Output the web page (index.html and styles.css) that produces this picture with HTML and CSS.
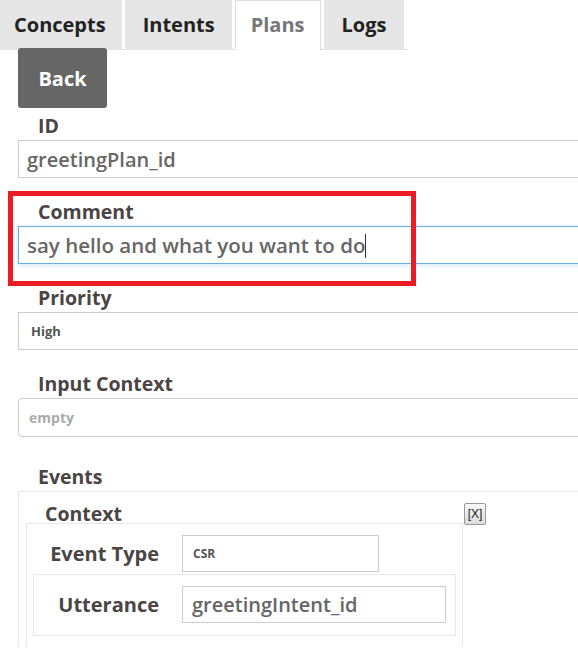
FILE: index.html
```html
<!DOCTYPE html>
<html lang="en">
<head>
    <meta charset="UTF-8">
    <meta name="viewport" content="width=device-width, initial-scale=1.0">
    <title>Plans</title>
    <link rel="stylesheet" href="styles.css">
</head>
<body>

<div class="tabs">
    <div class="tab">Concepts</div>
    <div class="tab">Intents</div>
    <div class="tab active">Plans</div>
    <div class="tab">Logs</div>
</div>

<div class="page">
    <button class="back">Back</button>

    <div class="field first">
        <label>ID</label>
        <input type="text" value="greetingPlan_id" readonly>
    </div>

    <div class="field marked">
        <label>Comment</label>
        <div class="input focused">say hello and what you want to do<span class="caret"></span></div>
        <div class="mark"></div>
    </div>

    <div class="field">
        <label>Priority</label>
        <select class="select">
            <option>High</option>
        </select>
    </div>

    <div class="field">
        <label>Input Context</label>
        <input type="text" class="rounded" placeholder="empty">
    </div>

    <div class="field events">
        <label>Events</label>
        <div class="events-box">
            <div class="context-col">
                <div class="context-title">Context</div>
                <div class="context-box">
                    <div class="row">
                        <span class="row-label">Event Type</span>
                        <input type="text" class="small" value="CSR" readonly>
                    </div>
                    <div class="row boxed">
                        <span class="row-label">Utterance</span>
                        <input type="text" class="wide" value="greetingIntent_id" readonly>
                    </div>
                </div>
            </div>
            <button class="remove">[X]</button>
        </div>
    </div>
</div>

</body>
</html>
```

FILE: styles.css
```css
html, body {
    margin: 0;
    padding: 0;
    overflow: hidden;
    background-color: #fff;
}

body {
    font-family: "Open Sans", sans-serif;
    color: #4a4444;
}

/* tab strip */
.tabs {
    display: inline-flex;
    gap: 3px;
    margin-left: -4px;
    padding-right: 4px;
    border-bottom: 1px solid #ddd;
    height: 49px;
}

.tab {
    height: 50px;
    line-height: 50px;
    padding: 0 18px;
    font-size: 20px;
    font-weight: bold;
    color: #222;
    background-color: #e6e6e6;
}

.tab:first-child {
    padding: 0 16px 0 18px;
}

.tab:nth-child(2) {
    padding: 0 17px 0 18px;
}

.tab.active {
    background-color: #fff;
    color: #777;
    padding: 0 15px;
    border: 1px solid #ddd;
    border-bottom: none;
    height: 49px;
    line-height: 48px;
}

.page {
    padding-left: 18px;
}

.back {
    display: block;
    width: 89px;
    height: 60px;
    margin-top: -2px;
    border: none;
    border-radius: 3px;
    background-color: #666;
    color: #fff;
    font-family: "Open Sans", sans-serif;
    font-size: 20px;
    font-weight: bold;
    position: relative;
}

/* form fields */
.field {
    margin-bottom: 22px;
}

.field.first {
    margin-top: 6px;
}

.field label {
    display: block;
    font-size: 19.5px;
    font-weight: bold;
    line-height: 24px;
    padding-left: 20px;
    margin-bottom: 2px;
}

.field input,
.field .input,
.field .select {
    display: block;
    box-sizing: border-box;
    width: calc(100% + 20px);
    height: 38px;
    margin: 0;
    padding: 0 8px;
    border: 1px solid #ccc;
    border-radius: 0;
    background-color: #fff;
    font-family: "Open Sans", sans-serif;
    font-size: 20px;
    font-weight: 600;
    color: #666;
    outline: none;
}

.field .input {
    line-height: 36px;
    white-space: nowrap;
    font-size: 20.5px;
}

.field .input.focused {
    border-color: #66afe9;
    box-shadow: 0 1px 5px rgba(102, 175, 233, 0.35);
}

.caret {
    display: inline-block;
    width: 1px;
    height: 24px;
    background-color: #333;
    vertical-align: -5px;
}

.field .select {
    appearance: none;
    -webkit-appearance: none;
    font-size: 13px;
    font-weight: bold;
    color: #555;
    padding-left: 12px;
}

.field input.rounded {
    height: 39px;
    border-radius: 4px;
    font-size: 14px;
    font-weight: bold;
    padding-left: 10px;
}

.field input.rounded::placeholder {
    color: #aaa;
}

/* red annotation frame round the comment field */
.marked {
    position: relative;
}

.mark {
    position: absolute;
    left: -10px;
    top: -9px;
    width: 408px;
    height: 95px;
    box-sizing: border-box;
    border: 5px solid #ed1c24;
}

/* events */
.field.events {
    margin-top: 28px;
    margin-bottom: 0;
}

.events-box {
    display: flex;
    align-items: flex-start;
    width: calc(100% + 20px);
    box-sizing: border-box;
    padding-top: 11px;
    border: 1px solid #e6e6e6;
    border-bottom: none;
}

.context-col {
    width: 437px;
    margin-left: 7px;
}

.context-title {
    font-size: 19.5px;
    font-weight: bold;
    line-height: 19px;
    margin-top: 1px;
    padding-left: 19px;
}

.context-box {
    border: 1px solid #e6e6e6;
    border-bottom: none;
    padding: 11px 6px 10px 6px;
}

.row {
    display: flex;
    align-items: center;
    gap: 23px;
}

.row.boxed {
    margin-top: 2px;
    padding: 11px 8px 12px 0;
    border: 1px solid #e6e6e6;
}

.row-label {
    width: 126px;
    text-align: right;
    font-size: 20px;
    font-weight: bold;
    line-height: 27px;
}

.row.boxed .row-label {
    width: 125px;
}

.field .row input {
    height: 37px;
}

.field .row input.small {
    width: 197px;
    font-size: 12px;
    font-weight: bold;
    color: #555;
    padding-left: 10px;
}

.field .row input.wide {
    width: 264px;
    padding-left: 9px;
}

.remove {
    width: 22px;
    height: 22px;
    margin-left: 1px;
    padding: 0;
    border: 1px solid #999;
    border-radius: 2px;
    background: linear-gradient(#f8f8f8, #dcdcdc);
    font-family: "Liberation Sans", Arial, sans-serif;
    font-size: 12px;
    color: #222;
}
```
